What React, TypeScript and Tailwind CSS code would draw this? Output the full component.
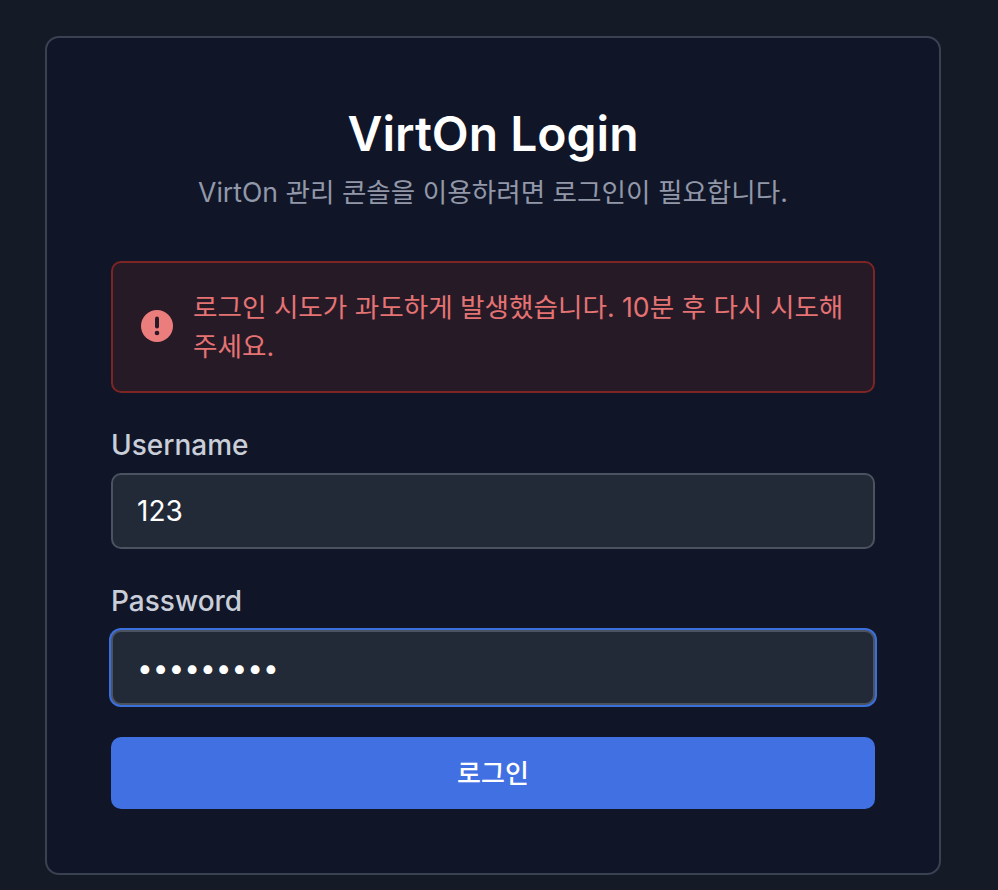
import React from "react";

const App = () => {
    return (
        <div className="h-[890px] overflow-hidden bg-[#141a26] pt-9 pl-[45px] pr-[57px] font-['Inter','Noto_Sans_CJK_KR',sans-serif]">
            <div className="h-[839px] rounded-[14px] border-2 border-[#3a4150] bg-[#101628] px-[64px] pt-[68px]">
                <h1 className="text-center text-[48px] leading-[56px] font-semibold text-white">VirtOn Login</h1>
                <p className="mt-[12px] text-center text-[26.6px] leading-[36px] text-[#9298a8]">
                    VirtOn 관리 콘솔을 이용하려면 로그인이 필요합니다.
                </p>

                <div className="mt-[51px] flex h-[132px] items-center gap-[20px] rounded-[10px] border-2 border-[#7c2523] bg-[#271a27] pb-[2px] pl-7 pr-6 text-[26.6px] leading-[39px] text-[#e57373]">
                    <svg className="h-8 w-8 shrink-0" viewBox="0 0 32 32">
                        <circle cx="16" cy="16" r="16" fill="#ec7d7d" />
                        <rect x="14" y="6.500" width="4" height="12" rx="2" fill="#271a27" />
                        <circle cx="16" cy="23" r="2.300" fill="#271a27" />
                    </svg>
                    <span className="mt-[2px]">로그인 시도가 과도하게 발생했습니다. 10분 후 다시 시도해 주세요.</span>
                </div>

                <label className="mt-[35px] block text-[28px] leading-[34px] font-medium text-[#c9ced8]">Username</label>
                <input
                    readOnly
                    value="123"
                    className="mt-[11px] block h-[76px] w-full rounded-[10px] border-2 border-[#4b5260] bg-[#222937] px-6 text-[28px] text-white outline-none"
                />

                <label className="mt-[35px] block text-[28px] leading-[34px] font-medium text-[#c9ced8]">Password</label>
                <input
                    readOnly
                    type="password"
                    value="123456789"
                    className="mt-[12px] block h-[75px] w-full rounded-[10px] border-2 border-[#4b5260] bg-[#222937] px-6 text-[28px] text-white outline-none ring-2 ring-[#3a6fdc]"
                />

                <button className="mt-8 block h-[72px] w-full rounded-[10px] bg-[#4170e2] text-[26px] font-medium text-white">
                    로그인
                </button>
            </div>
        </div>
    );
};

export default App;
